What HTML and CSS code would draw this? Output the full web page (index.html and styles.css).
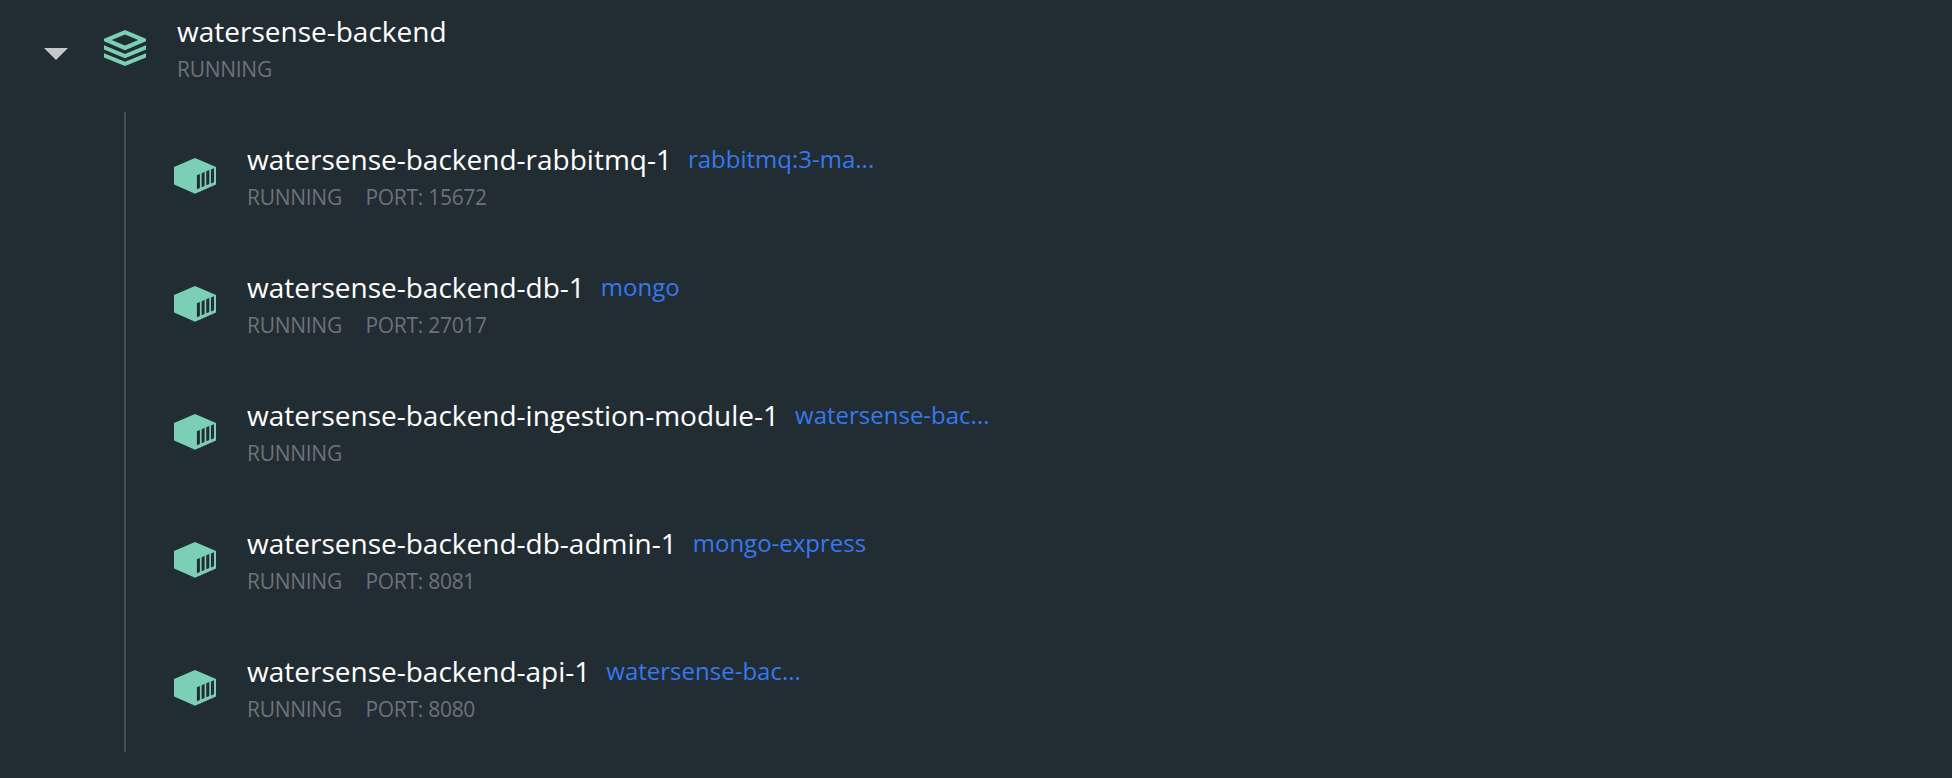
FILE: index.html
```html
<!DOCTYPE html>
<html lang="en"><head><meta charset="utf-8"><title>Containers</title><link rel="stylesheet" href="styles.css"></head>
<body>
<svg width="0" height="0" class="defs"><symbol id="box" viewBox="0 0 44 36"><path fill="#7acfb4" d="M22 0 43 9v17.5L22 35.8 1 26.5V9z"/><path fill="#222d33" d="M23.9 17.3l3-1.2v14l-3 1.2zM28.6 15.3l3-1.2v14l-3 1.2zM33.3 13.3l3-1.2v14l-3 1.2zM38 11.5l3-1.2v14l-3 1.2z"/></symbol></svg>
<header class="group">
<svg class="caret" viewBox="0 0 24 12"><path fill="#c8c8c8" d="M0 0h24L12 12z"/></svg>
<svg class="stack" viewBox="0 0 44 36"><path fill="#7acfb4" fill-rule="evenodd" d="M22 0 43 8.8v2.4L22 20.3 1 11.2V8.8zM22 4.6 8.7 10 22 15.4 35.3 10zM1 15.3l21 8.6 21-8.6v4.2l-21 8.7-21-8.7zM1 23.3l21 8.4 21-8.4v4.2L22 36 1 27.5z"/></svg>
<div class="info"><div class="title">watersense-backend</div><div class="meta"><span>RUNNING</span></div></div>
</header>
<main class="list">
<section class="row"><svg class="icon"><use href="#box"/></svg><div class="info"><div class="title">watersense-backend-rabbitmq-1<a class="image">rabbitmq:3-ma...</a></div><div class="meta"><span>RUNNING</span><span>PORT: 15672</span></div></div></section>
<section class="row"><svg class="icon"><use href="#box"/></svg><div class="info"><div class="title">watersense-backend-db-1<a class="image">mongo</a></div><div class="meta"><span>RUNNING</span><span>PORT: 27017</span></div></div></section>
<section class="row"><svg class="icon"><use href="#box"/></svg><div class="info"><div class="title">watersense-backend-ingestion-module-1<a class="image">watersense-bac...</a></div><div class="meta"><span>RUNNING</span></div></div></section>
<section class="row"><svg class="icon"><use href="#box"/></svg><div class="info"><div class="title">watersense-backend-db-admin-1<a class="image">mongo-express</a></div><div class="meta"><span>RUNNING</span><span>PORT: 8081</span></div></div></section>
<section class="row"><svg class="icon"><use href="#box"/></svg><div class="info"><div class="title">watersense-backend-api-1<a class="image">watersense-bac...</a></div><div class="meta"><span>RUNNING</span><span>PORT: 8080</span></div></div></section>
</main>
</body></html>
```
FILE: styles.css
```css
body{margin:0;height:778px;overflow:hidden;background:#222d33;font-family:"Open Sans",sans-serif;color:#fff}
.defs{display:block}
.group{display:flex;height:112px}
.caret{width:24px;height:12px;margin:48px 35px 0 44px}
.stack{width:44px;height:36px;margin:30px 30px 0 0}
.info{padding-top:11px}
.title{display:flex;align-items:center;height:40px;font-size:28px;white-space:nowrap}
.image{margin-left:16px;padding-bottom:1px;font-size:24px;color:#3578f0}
.meta{display:flex;gap:23.5px;height:32px;margin-top:2px;line-height:32px;font-size:21px;letter-spacing:-.28px;color:#6c7278}
.list{margin-left:124px;height:640px;border-left:2px solid #434d52}
.row{display:flex;height:128px}
.row .info{padding-top:27px}
.icon{width:44px;height:36px;margin:46px 30px 0 47px}
```
